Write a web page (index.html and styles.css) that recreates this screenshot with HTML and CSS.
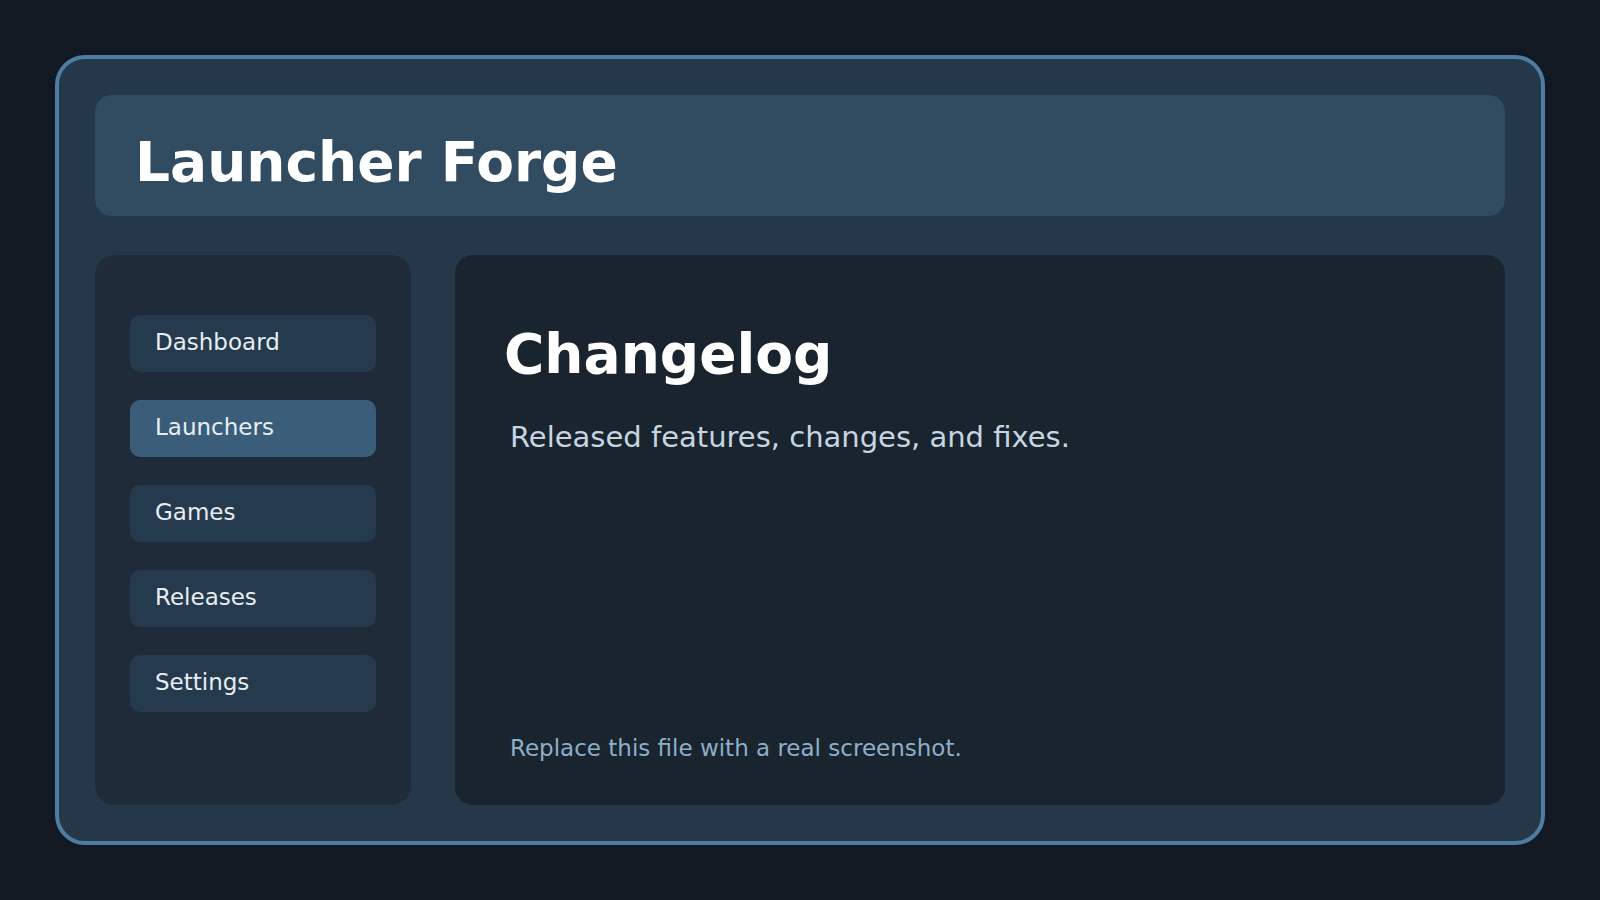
FILE: index.html
```html
<!DOCTYPE html>
<html lang="en">
<head>
<meta charset="utf-8">
<title>Launcher Forge</title>
<link rel="stylesheet" href="styles.css">
</head>
<body>
<div class="frame">
  <header class="topbar">
    <h1 class="brand">Launcher Forge</h1>
  </header>
  <div class="layout">
    <nav class="sidebar">
      <div class="nav-item">Dashboard</div>
      <div class="nav-item active">Launchers</div>
      <div class="nav-item">Games</div>
      <div class="nav-item">Releases</div>
      <div class="nav-item">Settings</div>
    </nav>
    <main class="content">
      <h2 class="page-title">Changelog</h2>
      <p class="subtitle">Released features, changes, and fixes.</p>
      <p class="note">Replace this file with a real screenshot.</p>
    </main>
  </div>
</div>
</body>
</html>
```

FILE: styles.css
```css
html, body {
  margin: 0;
  padding: 0;
  background: #121923;
  font-family: "DejaVu Sans", "Liberation Sans", sans-serif;
}

.frame {
  box-sizing: border-box;
  margin: 55px;
  height: 790px;
  border: 4px solid #4f7ca3;
  border-radius: 30px;
  background: #24384a;
  padding: 36px;
  display: flex;
  flex-direction: column;
  gap: 39px;
}

.topbar {
  box-sizing: border-box;
  height: 121px;
  flex: none;
  background: #314b61;
  border-radius: 17px;
  padding: 35px 40px 0;
}

.brand {
  margin: 0;
  font-size: 55px;
  font-weight: bold;
  line-height: normal;
  color: #ffffff;
}

.layout {
  flex: 1;
  display: flex;
  gap: 44px;
  min-height: 0;
}

.sidebar {
  box-sizing: border-box;
  width: 316px;
  flex: none;
  background: #1f2b38;
  border-radius: 20px;
  padding: 60px 35px;
  display: flex;
  flex-direction: column;
  gap: 28px;
}

.nav-item {
  box-sizing: border-box;
  height: 57px;
  border-radius: 10px;
  background: #253a4c;
  color: #e6edf3;
  font-size: 23px;
  padding: 0 0 4px 25px;
  display: flex;
  align-items: center;
}

.nav-item.active {
  background: #3a5d79;
}

.content {
  flex: 1;
  box-sizing: border-box;
  background: #19242f;
  border-radius: 18px;
  padding: 67px 40px 44px 49px;
  display: flex;
  flex-direction: column;
}

.page-title {
  margin: 0;
  font-size: 55px;
  font-weight: bold;
  line-height: normal;
  color: #ffffff;
}

.subtitle {
  margin: 34px 0 0 6px;
  font-size: 29px;
  line-height: normal;
  color: #c8d5e1;
}

.note {
  margin: auto 0 0 6px;
  font-size: 23px;
  line-height: normal;
  color: #8eafca;
}
```
